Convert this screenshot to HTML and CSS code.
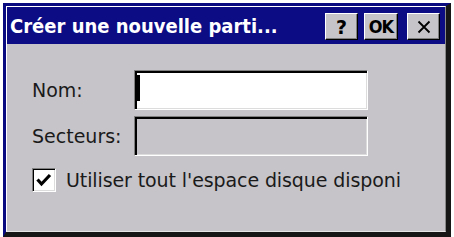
FILE: index.html
```html
<!DOCTYPE html>
<html>
<head>
<meta charset="utf-8">
<link rel="stylesheet" href="styles.css">
</head>
<body>
<div class="window">
  <div class="frame">
    <div class="titlebar">
      <span class="title">Créer une nouvelle parti...</span>
      <div class="tbuttons">
        <div class="tbtn help">?</div>
        <div class="tbtn ok">OK</div>
        <div class="tbtn close">
          <svg width="14" height="14" viewBox="0 0 14 14"><path d="M1.5 1.5L12.5 12.5M12.5 1.5L1.5 12.5" stroke="#000" stroke-width="1.8"/></svg>
        </div>
      </div>
    </div>
    <div class="client">
      <div class="form">
        <label class="lbl">Nom:</label>
        <div class="field active"><span class="caret"></span></div>
        <label class="lbl">Secteurs:</label>
        <div class="field disabled"></div>
      </div>
      <div class="checkrow">
        <div class="checkbox">
          <svg width="18" height="18" viewBox="0 0 18 18"><path d="M2.5 8.5L6.5 13L15 4" stroke="#000" stroke-width="3.2" fill="none"/></svg>
        </div>
        <span class="checklabel">Utiliser tout l'espace disque disponi</span>
      </div>
    </div>
  </div>
</div>
</body>
</html>
```
FILE: styles.css
```css
html, body {
  margin: 0;
  padding: 0;
  background: #ffffff;
}
body {
  width: 454px;
  height: 237px;
  overflow: hidden;
  font-family: "DejaVu Sans", sans-serif;
}
.window {
  margin: 3px 0 0 3px;
  width: 448px;
  height: 234px;
  box-sizing: border-box;
  border-style: solid;
  border-width: 3px 5px 5px 3px;
  border-color: #0a0a80 #161616 #161616 #0a0a80;
}
.frame {
  height: 100%;
  box-sizing: border-box;
  border: 1px solid;
  border-color: #ffffff #8a8a8a #e6e6e6 #ffffff;
  display: flex;
  flex-direction: column;
  background: #c6c4c8;
}
.titlebar {
  height: 37px;
  background: #0c0c84;
  display: flex;
  align-items: center;
  justify-content: space-between;
  padding: 0 5px 0 3px;
}
.title {
  color: #ffffff;
  font-family: "DejaVu Sans Condensed", "DejaVu Sans", sans-serif;
  font-weight: bold;
  font-size: 20px;
  white-space: nowrap;
  padding-top: 1px;
}
.tbuttons {
  display: flex;
  align-items: center;
  padding-top: 2px;
}
.tbtn {
  height: 27px;
  width: 33px;
  box-sizing: border-box;
  background: #c6c4c8;
  border: 1px solid;
  border-color: #ffffff #000000 #000000 #ffffff;
  box-shadow: inset -1px -1px 0 #808080;
  display: flex;
  align-items: center;
  justify-content: center;
  font-weight: bold;
  font-size: 19px;
  color: #000;
}
.tbtn.ok {
  margin-left: 6px;
  width: 34px;
  font-family: "DejaVu Sans Condensed", "DejaVu Sans", sans-serif;
  font-size: 18px;
  letter-spacing: -1px;
}
.tbtn.close { margin-left: 9px; }
.client {
  flex: 1;
  padding: 26px 0 0 25px;
  color: #1a1a1a;
  font-size: 19px;
}
.form {
  display: grid;
  grid-template-columns: 102px 234px;
  grid-auto-rows: 40px;
  row-gap: 6px;
  align-items: center;
}
.lbl {
  align-self: center;
}
.field {
  height: 40px;
  box-sizing: border-box;
  border: 1px solid;
  border-color: #808080 #ffffff #ffffff #808080;
  box-shadow: inset 2px 2px 0 #000, inset -1px -1px 0 #dcdcdc;
  position: relative;
}
.field.active { background: #ffffff; }
.field.disabled { background: #c6c4c8; }
.caret {
  position: absolute;
  left: 2px;
  top: 4px;
  width: 3px;
  height: 26px;
  background: #000;
}
.checkrow {
  display: flex;
  align-items: center;
  margin-top: 12px;
}
.checkbox {
  width: 24px;
  height: 24px;
  box-sizing: border-box;
  background: #ffffff;
  border: 1px solid;
  border-color: #808080 #ffffff #ffffff #808080;
  box-shadow: inset 1px 1px 0 #000, inset -1px -1px 0 #dcdcdc;
  display: flex;
  align-items: center;
  justify-content: center;
}
.checklabel {
  margin-left: 10px;
  white-space: nowrap;
  letter-spacing: -0.1px;
}
```
